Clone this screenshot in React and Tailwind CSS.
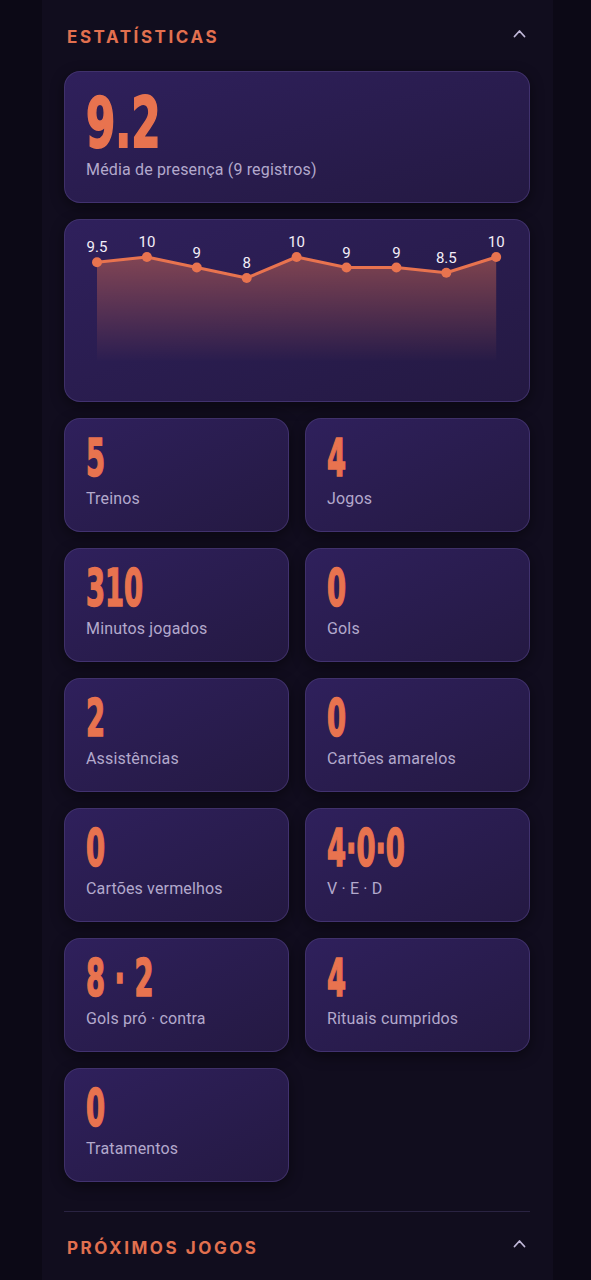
import React from "react";

const points = [9.5, 10, 9, 8, 10, 9, 9, 8.5, 10];

const stats = [
  { value: "5", label: "Treinos" },
  { value: "4", label: "Jogos" },
  { value: "310", label: "Minutos jogados" },
  { value: "0", label: "Gols" },
  { value: "2", label: "Assistências" },
  { value: "0", label: "Cartões amarelos" },
  { value: "0", label: "Cartões vermelhos" },
  { value: "4·0·0", label: "V · E · D" },
  { value: "8 · 2", label: "Gols pró · contra" },
  { value: "4", label: "Rituais cumpridos" },
  { value: "0", label: "Tratamentos" },
];

const numFont = {
  fontFamily: '"DejaVu Sans Condensed", "Liberation Sans", sans-serif',
};

const Chevron = () => (
  <svg width="13" height="9" viewBox="0 0 13 9" fill="none">
    <path d="M1.5 7.5 L6.5 2 L11.5 7.5" stroke="#c0b7d8" strokeWidth="1.8" strokeLinecap="round" strokeLinejoin="round" />
  </svg>
);

const SectionHeader = ({ title }) => (
  <div className="flex items-center justify-between pl-[3px] pr-[4px]">
    <h2 className="text-[17px] font-bold tracking-[0.15em] text-[#e2704f] font-['Inter',sans-serif]">
      {title}
    </h2>
    <div className="-mt-[9px]">
      <Chevron />
    </div>
  </div>
);

const cardClass =
  "rounded-[16px] border border-[#4a3a78]/70 bg-gradient-to-br from-[#2f205c] to-[#241942] shadow-[0_4px_14px_rgba(0,0,0,0.45)]";

const StatCard = ({ value, label }) => (
  <div className={`${cardClass} h-[114px] px-[21px] pt-[14px]`}>
    <div className="h-[46px]">
      <span
        style={numFont}
        className="inline-block origin-top-left scale-x-[0.76] scale-y-[1.27] text-[40px] font-bold leading-none text-[#e8734f] whitespace-nowrap [-webkit-text-stroke:1.2px_#e8734f]"
      >
        {value}
      </span>
    </div>
    <div className="mt-[8px] text-[16px] text-[#b3a9cc] tracking-[0.01em]">
      {label}
    </div>
  </div>
);

const Chart = () => {
  const xs = points.map((_, i) => 32 + i * 49.9);
  const ys = points.map((v) => 21 + (10 - v) * 10.5);
  const line = xs.map((x, i) => `${i === 0 ? "M" : "L"}${x} ${ys[i]}`).join(" ");
  const area = `${line} L${xs[xs.length - 1]} 126 L${xs[0]} 126 Z`;
  return (
    <div className={`${cardClass} h-[183px] pt-[16px] overflow-hidden`}>
      <svg width="464" height="140" viewBox="0 0 464 140" className="block">
        <defs>
          <linearGradient id="fade" x1="0" y1="0" x2="0" y2="1">
            <stop offset="0" stopColor="#e8734f" stopOpacity="0.45" />
            <stop offset="1" stopColor="#e8734f" stopOpacity="0" />
          </linearGradient>
        </defs>
        <path d={area} fill="url(#fade)" />
        <path d={line} fill="none" stroke="#e8734f" strokeWidth="3" strokeLinejoin="round" />
        {xs.map((x, i) => (
          <g key={i}>
            <circle cx={x} cy={ys[i]} r="5" fill="#e8734f" />
            <text
              x={x}
              y={ys[i] - 10}
              textAnchor="middle"
              fill="#f3eef8"
              fontSize="15"
              fontFamily="Roboto, sans-serif"
            >
              {points[i]}
            </text>
          </g>
        ))}
      </svg>
    </div>
  );
};

export default function App() {
  return (
    <div className="min-h-[1280px] bg-[#0c0916] pl-[42px] pr-[38px] font-['Roboto',sans-serif]">
      <div className="min-h-[1280px] bg-[#110d1e] pl-[22px] pr-[23px] pt-[25px]">
        <SectionHeader title="ESTATÍSTICAS" />
        <div className="mt-[20px] flex flex-col gap-[16px]">
          <div className={`${cardClass} h-[132px] px-[21px] pt-[16px]`}>
            <div className="h-[66px]">
              <span
                style={numFont}
                className="inline-block origin-top-left scale-x-[0.9] scale-y-[1.35] text-[52px] font-bold leading-none text-[#e8734f] [-webkit-text-stroke:1.4px_#e8734f]"
              >
                9.2
              </span>
            </div>
            <div className="mt-[4px] text-[16px] text-[#b3a9cc] tracking-[0.01em]">
              Média de presença (9 registros)
            </div>
          </div>
          <Chart />
          <div className="grid grid-cols-2 gap-[16px]">
            {stats.map((s, i) => (
              <StatCard key={i} value={s.value} label={s.label} />
            ))}
          </div>
        </div>
        <div className="mt-[29px] border-t border-[#2a2342] pt-[24px]">
          <SectionHeader title="PRÓXIMOS JOGOS" />
        </div>
      </div>
    </div>
  );
}
